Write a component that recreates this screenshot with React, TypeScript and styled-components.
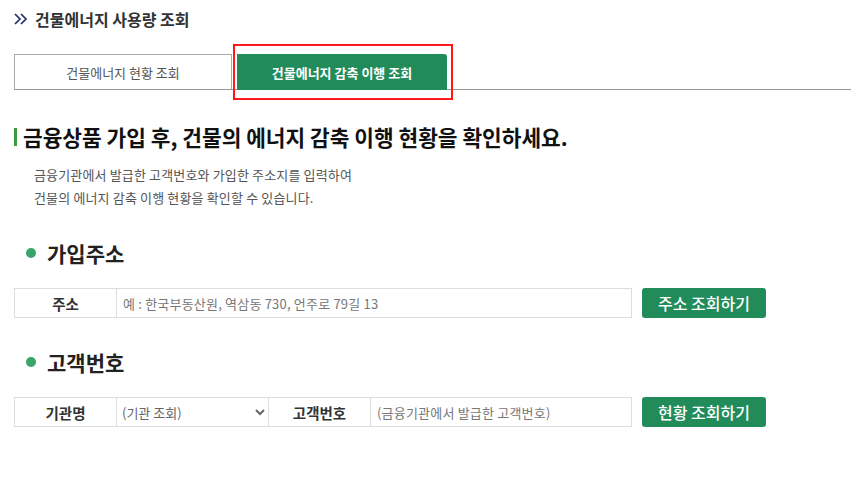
import React from 'react'
import styled, { createGlobalStyle } from 'styled-components'

const GlobalStyle = createGlobalStyle`
	body {
		margin: 0;
		background: #fff;
		font-family: 'Noto Sans CJK KR', 'Noto Sans', sans-serif;
		color: #333;
	}
	* {
		box-sizing: border-box;
	}
`

const Page = styled.div`
	padding: 8px 0 0 14px;
`

const PageTitle = styled.h1`
	display: flex;
	align-items: center;
	gap: 6px;
	margin: 0;
	height: 22px;
	font-size: 16px;
	font-weight: 700;
	color: #333;
`

const TabBar = styled.div`
	display: flex;
	align-items: flex-end;
	margin-top: 24px;
	height: 36px;
	border-bottom: 1px solid #999;
`

const Tab = styled.button<{ $active?: boolean }>`
	position: relative;
	height: ${({ $active }) => ($active ? '36px' : '35px')};
	margin-bottom: ${({ $active }) => ($active ? '-1px' : '0')};
	width: ${({ $active }) => ($active ? '210px' : '218px')};
	margin-right: 5px;
	border: 1px solid ${({ $active }) => ($active ? '#218b5a' : '#aaa')};
	border-bottom: none;
	border-top-right-radius: ${({ $active }) => ($active ? '3px' : '0')};
	background: ${({ $active }) => ($active ? '#218b5a' : '#fff')};
	color: ${({ $active }) => ($active ? '#fff' : '#555')};
	font-family: inherit;
	font-size: 13px;
	font-weight: ${({ $active }) => ($active ? 700 : 400)};
	padding: 0;
`

// red annotation frame drawn over the active tab
const Highlight = styled.span`
	position: absolute;
	left: -5px;
	right: -7px;
	top: -11px;
	bottom: -10px;
	border: 2px solid #ff1a1a;
	pointer-events: none;
`

const Lead = styled.h2`
	display: flex;
	align-items: center;
	gap: 6px;
	margin: 33px 0 0;
	font-size: 21.4px;
	font-weight: 700;
	color: #111;
	line-height: 28px;

	&::before {
		content: '';
		width: 3px;
		height: 18px;
		background: #3c9c3c;
	}
`

const Desc = styled.p`
	margin: 12px 0 0 20px;
	font-size: 13px;
	letter-spacing: 0.15px;
	line-height: 23px;
	color: #555;
`

const SectionTitle = styled.h3`
	display: flex;
	align-items: center;
	gap: 11px;
	margin: 30px 0 0 12px;
	font-size: 21px;
	font-weight: 700;
	color: #222;
	line-height: 28px;

	&::before {
		content: '';
		width: 10px;
		height: 10px;
		border-radius: 50%;
		background: #3aa56b;
	}
`

const Row = styled.div`
	display: flex;
	align-items: center;
	gap: 10px;
	margin-top: 21px;
`

const Table = styled.div<{ $cols: string }>`
	display: grid;
	grid-template-columns: ${({ $cols }) => $cols};
	width: 618px;
	height: 30px;
	border: 1px solid #ddd;
`

const Label = styled.div`
	display: flex;
	align-items: center;
	justify-content: center;
	font-size: 14.5px;
	font-weight: 700;
	color: #333;
	border-right: 1px solid #ddd;
`

const Input = styled.input`
	border: none;
	border-right: 1px solid #ddd;
	padding: 0 6px;
	font-family: inherit;
	font-size: 13px;
	letter-spacing: 0.2px;
	color: #333;
	outline: none;
	min-width: 0;

	&:last-child {
		border-right: none;
	}

	&::placeholder {
		color: #777;
	}
`

const Select = styled.select`
	border: none;
	border-right: 1px solid #ddd;
	padding: 0 1px;
	font-family: inherit;
	font-size: 13px;
	color: #666;
	background: #fff;
	outline: none;
`

const Button = styled.button`
	width: 124px;
	height: 30px;
	border: none;
	border-radius: 3px;
	background: #218b5a;
	color: #fff;
	font-family: inherit;
	font-size: 16px;
	font-weight: 500;
`

const Chevrons = () => (
	<svg width='15' height='12' viewBox='0 0 15 12' fill='none' stroke='#1f2f6a' strokeWidth='1.7'>
		<path d='M1 1l5 5-5 5M7 1l5 5-5 5' />
	</svg>
)

export default function App() {
	return (
		<Page>
			<GlobalStyle />
			<PageTitle>
				<Chevrons />
				건물에너지 사용량 조회
			</PageTitle>

			<TabBar>
				<Tab>건물에너지 현황 조회</Tab>
				<Tab $active>
					건물에너지 감축 이행 조회
					<Highlight />
				</Tab>
			</TabBar>

			<Lead>금융상품 가입 후, 건물의 에너지 감축 이행 현황을 확인하세요.</Lead>
			<Desc>
				금융기관에서 발급한 고객번호와 가입한 주소지를 입력하여
				<br />
				건물의 에너지 감축 이행 현황을 확인할 수 있습니다.
			</Desc>

			<SectionTitle>가입주소</SectionTitle>
			<Row>
				<Table $cols='102px 1fr'>
					<Label>주소</Label>
					<Input placeholder='예 : 한국부동산원, 역삼동 730, 언주로 79길 13' />
				</Table>
				<Button>주소 조회하기</Button>
			</Row>

			<SectionTitle>고객번호</SectionTitle>
			<Row>
				<Table $cols='102px 152px 102px 1fr'>
					<Label>기관명</Label>
					<Select defaultValue=''>
						<option value=''>(기관 조회)</option>
					</Select>
					<Label>고객번호</Label>
					<Input placeholder='(금융기관에서 발급한 고객번호)' />
				</Table>
				<Button>현황 조회하기</Button>
			</Row>
		</Page>
	)
}
